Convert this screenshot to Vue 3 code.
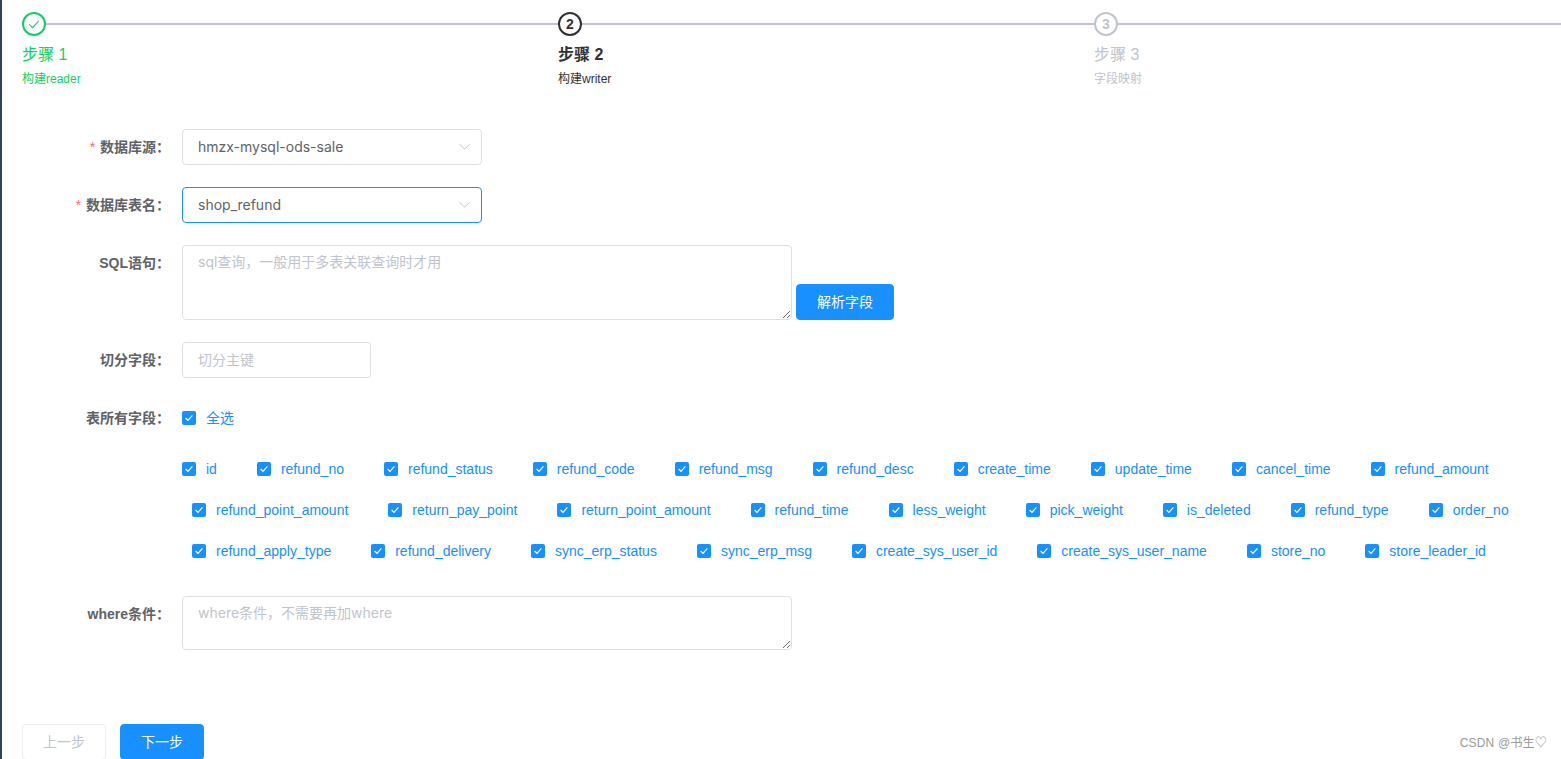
<script setup>
const steps = [
  { title: '步骤 1', desc: '构建reader', state: 'finish', num: 1 },
  { title: '步骤 2', desc: '构建writer', state: 'active', num: 2 },
  { title: '步骤 3', desc: '字段映射', state: 'wait', num: 3 }
]
const fields = [
  'id', 'refund_no', 'refund_status', 'refund_code', 'refund_msg', 'refund_desc', 'create_time', 'update_time',
  'cancel_time', 'refund_amount', 'refund_point_amount', 'return_pay_point', 'return_point_amount', 'refund_time',
  'less_weight', 'pick_weight', 'is_deleted', 'refund_type', 'order_no', 'refund_apply_type', 'refund_delivery',
  'sync_erp_status', 'sync_erp_msg', 'create_sys_user_id', 'create_sys_user_name', 'store_no', 'store_leader_id'
]
</script>

<template>
  <div class="page">
    <aside class="stripe"></aside>
    <main class="main">
      <div class="steps">
        <div v-for="s in steps" :key="s.num" class="step" :class="s.state">
          <div class="head">
            <span class="line"></span>
            <span class="icon">
              <svg v-if="s.state === 'finish'" width="14" height="14" viewBox="0 0 14 14" fill="none">
                <path d="M2.2 7.4 L5.6 10.6 L11.8 3.8" stroke="currentColor" stroke-width="1.1" />
              </svg>
              <b v-else>{{ s.num }}</b>
            </span>
          </div>
          <div class="title">{{ s.title }}</div>
          <div class="desc">{{ s.desc }}</div>
        </div>
      </div>

      <form class="form" @submit.prevent>
        <div class="item">
          <label class="label"><i>*</i> 数据库源：</label>
          <div class="select">
            <input class="input" readonly value="hmzx-mysql-ods-sale" />
            <svg class="arrow" width="12" height="12" viewBox="0 0 12 12" fill="none"><path d="M0.6 3.2 L5.6 8.2 L10.6 3.2" stroke="#c0c4cc" stroke-width="1" /></svg>
          </div>
        </div>
        <div class="item">
          <label class="label"><i>*</i> 数据库表名：</label>
          <div class="select">
            <input class="input focus" readonly value="shop_refund" />
            <svg class="arrow" width="12" height="12" viewBox="0 0 12 12" fill="none"><path d="M0.6 3.2 L5.6 8.2 L10.6 3.2" stroke="#c0c4cc" stroke-width="1" /></svg>
          </div>
        </div>
        <div class="item sql">
          <label class="label">SQL语句：</label>
          <textarea class="area tall" placeholder="sql查询，一般用于多表关联查询时才用"></textarea>
          <button type="button" class="btn primary">解析字段</button>
        </div>
        <div class="item">
          <label class="label">切分字段：</label>
          <input class="input short" placeholder="切分主键" />
        </div>
        <div class="item all">
          <label class="label">表所有字段：</label>
          <span class="check">
            <svg class="box" width="14" height="14" viewBox="0 0 14 14"><rect width="14" height="14" rx="2" fill="#1890ff" /><path d="M3.6 7 L6 9.4 L10.4 4.4" fill="none" stroke="#fff" stroke-width="1.2" /></svg>
            <span class="ctext">全选</span>
          </span>
        </div>
        <div class="group">
          <span v-for="f in fields" :key="f" class="check field">
            <svg class="box" width="14" height="14" viewBox="0 0 14 14"><rect width="14" height="14" rx="2" fill="#1890ff" /><path d="M3.6 7 L6 9.4 L10.4 4.4" fill="none" stroke="#fff" stroke-width="1.2" /></svg>
            <span class="ctext">{{ f }}</span>
          </span>
        </div>
        <div class="item where">
          <label class="label">where条件：</label>
          <textarea class="area low" placeholder="where条件，不需要再加where"></textarea>
        </div>
      </form>

      <div class="actions">
        <button type="button" class="btn disabled">上一步</button>
        <button type="button" class="btn primary">下一步</button>
      </div>
      <div class="mark">CSDN @书生♡</div>
    </main>
  </div>
</template>

<style>
html, body { margin: 0; overflow: hidden; background: #fff; }
</style>

<style scoped>
.page {
  display: flex;
  height: 759px;
  overflow: hidden;
  font-family: "Liberation Sans", "Noto Sans CJK SC", sans-serif;
  font-size: 14px;
  color: #606266;
}
.stripe { flex: none; width: 2px; background: #304156; }
.main {
  position: relative;
  flex: 1;
  min-width: 0;
  padding: 12px 20px 0;
  overflow: hidden;
}
.steps { display: flex; width: 1608px; }
.step { flex: none; width: 536px; }
.head { position: relative; height: 24px; }
.line { position: absolute; left: 0; right: 0; top: 11px; height: 2px; background: #c0c4cc; }
.icon {
  position: relative;
  box-sizing: border-box;
  display: flex;
  align-items: center;
  justify-content: center;
  width: 24px;
  height: 24px;
  border: 2px solid currentColor;
  border-radius: 50%;
  background: #fff;
  font-size: 14px;
}
.title { font-size: 16px; line-height: 38px; }
.desc { margin-top: -5px; font-size: 12px; line-height: 20px; }
.finish { color: #13ce66; }
.active { color: #303133; }
.active .title { font-weight: 700; }
.wait { color: #c0c4cc; }

.form { margin-top: 40px; }
.item { display: flex; margin-bottom: 22px; }
.label {
  flex: none;
  box-sizing: border-box;
  width: 160px;
  padding-right: 12px;
  text-align: right;
  font-weight: 700;
  line-height: 36px;
  color: #606266;
}
.label i { font-style: normal; font-weight: 400; color: #f56c6c; margin-right: 1px; }
.select { position: relative; width: 300px; height: 36px; }
.input {
  display: block;
  box-sizing: border-box;
  width: 100%;
  height: 36px;
  padding: 0 15px 2px;
  border: 1px solid #dcdfe6;
  border-radius: 4px;
  outline: none;
  font-family: Inter, "Noto Sans CJK SC", sans-serif;
  font-size: 14px;
  color: #606266;
  background: #fff;
}
.input.focus { border-color: #1890ff; }
.input.short { width: 189px; }
.input::placeholder, .area::placeholder { color: #c0c4cc; opacity: 1; }
.arrow { position: absolute; right: 11px; top: 12px; }
.sql { align-items: flex-end; }
.sql .label { align-self: flex-start; }
.area {
  display: block;
  box-sizing: border-box;
  width: 610px;
  padding: 5px 15px;
  border: 1px solid #dcdfe6;
  border-radius: 4px;
  outline: none;
  font-family: Inter, "Noto Sans CJK SC", sans-serif;
  font-size: 14px;
  line-height: 1.5;
  color: #606266;
  background: #fff;
}
.tall { height: 75px; }
.low { height: 54px; }
.btn {
  flex: none;
  box-sizing: border-box;
  height: 36px;
  padding: 0 20px;
  border: 1px solid #dcdfe6;
  border-radius: 4px;
  font: inherit;
  line-height: 1;
}
.primary { border-color: #1890ff; background: #1890ff; color: #fff; }
.disabled { border-color: #ebeef5; background: #fff; color: #c0c4cc; }
.sql .btn { margin-left: 4px; }
.check { display: inline-flex; align-items: center; height: 22px; }
.box { flex: none; margin-right: 10px; }
.ctext { color: #1890ff; line-height: 22px; }
.all { align-items: center; }
.group {
  display: flex;
  flex-wrap: wrap;
  row-gap: 19px;
  margin-left: 160px;
}
.field { margin: 0 30px 0 10px; }
.field:first-child { margin-left: 0; }
.where { margin-top: 34px; margin-bottom: 0; }
.actions { display: flex; gap: 14px; margin-top: 74px; }
.mark {
  position: absolute;
  right: 14px;
  bottom: 8px;
  font-size: 12px;
  line-height: 16px;
  letter-spacing: 0.2px;
  color: #999;
}
</style>
